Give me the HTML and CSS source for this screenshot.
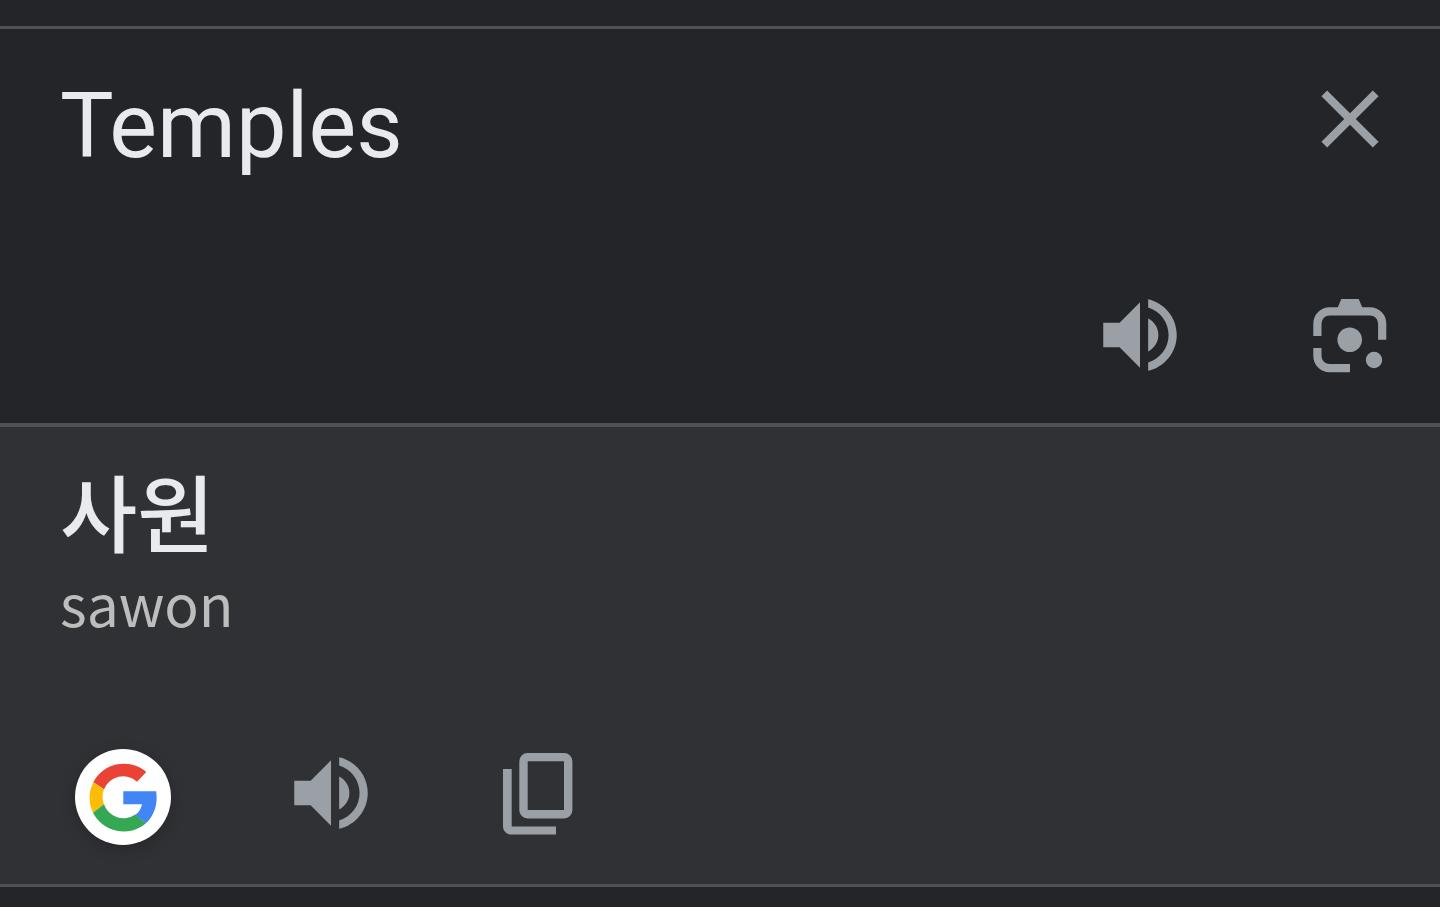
FILE: index.html
```html
<!DOCTYPE html>
<html lang="en">
<head>
<meta charset="utf-8">
<meta name="viewport" content="width=device-width, initial-scale=1">
<title>Translate</title>
<link rel="stylesheet" href="styles.css">
</head>
<body>
<main class="translator">
  <section class="source" aria-label="Source text">
    <div class="source-row">
      <textarea class="source-text" rows="1" aria-label="Text to translate" spellcheck="false">Temples</textarea>
      <button class="icon-button" type="button" aria-label="Clear text">
        <svg class="icon" viewBox="0 0 24 24" aria-hidden="true"><path d="M19 6.41 17.59 5 12 10.59 6.41 5 5 6.41 10.59 12 5 17.59 6.41 19 12 13.41 17.59 19 19 17.59 13.41 12z"/></svg>
      </button>
    </div>
    <div class="actions actions-end">
      <button class="icon-button" type="button" aria-label="Listen to source text">
        <svg class="icon" viewBox="0 0 24 24" aria-hidden="true"><path d="M3 9v6h4l5 5V4L7 9H3zm13.500 3c0-1.770-1.020-3.290-2.500-4.030v8.050c1.480-.73 2.500-2.250 2.500-4.020zM14 3.230v2.060c2.890.86 5 3.540 5 6.710s-2.110 5.850-5 6.710v2.060c4.010-.91 7-4.490 7-8.770s-2.990-7.860-7-8.770z"/></svg>
      </button>
      <button class="icon-button" type="button" aria-label="Translate with camera">
        <svg class="icon" viewBox="0 0 98 98" aria-hidden="true">
          <path d="M40.300 13H57.700L61.500 22H36.500z"/>
          <path class="stroke" d="M16.400 50V37.500A12.200 12.200 0 0 1 28.600 25.300H69A12.200 12.200 0 0 1 81.200 37.500V53.700M16.400 62V70A12.200 12.200 0 0 0 28.600 82.200H49"/>
          <circle cx="48.700" cy="53.700" r="12.300"/>
          <circle cx="73" cy="74" r="8.200"/>
        </svg>
      </button>
    </div>
  </section>
  <section class="target" aria-label="Translation">
    <p class="translation" lang="ko">사원</p>
    <p class="romanization">sawon</p>
    <div class="actions actions-start">
      <button class="google-button" type="button" aria-label="Search with Google">
        <svg class="google-logo" viewBox="0 0 96 96" aria-hidden="true">
          <path fill="#ea4335" d="M18.300 33.300A34.500 34.500 0 0 1 71.300 23L62 32.700A20.600 20.600 0 0 0 29 40.300z"/>
          <path fill="#fbbc05" d="M18.300 33.300A34.500 34.500 0 0 0 18 63.700L29 55.300A20.600 20.600 0 0 1 29 40.300z"/>
          <path fill="#34a853" d="M18 63.700A34.500 34.500 0 0 0 71 74.300L60.300 65.500A20.600 20.600 0 0 1 29 55.300z"/>
          <path fill="#4285f4" d="M48.300 42.300H81.200C83 55 79.500 66.500 71 74.300L60.300 66C64 63.500 66.200 59.500 67 55.300H48.300z"/>
        </svg>
      </button>
      <button class="icon-button" type="button" aria-label="Listen to translation">
        <svg class="icon" viewBox="0 0 24 24" aria-hidden="true"><path d="M3 9v6h4l5 5V4L7 9H3zm13.500 3c0-1.770-1.020-3.290-2.500-4.030v8.050c1.480-.73 2.500-2.250 2.500-4.020zM14 3.230v2.060c2.890.86 5 3.540 5 6.710s-2.110 5.850-5 6.710v2.060c4.010-.91 7-4.490 7-8.770s-2.990-7.860-7-8.770z"/></svg>
      </button>
      <button class="icon-button" type="button" aria-label="Copy translation">
        <svg class="icon" viewBox="0 0 98 98" aria-hidden="true">
          <path fill-rule="evenodd" d="M36.500 9H73.200A8.200 8.200 0 0 1 81.400 17.200V66.200A8.200 8.200 0 0 1 73.200 74.400H36.500A8.200 8.200 0 0 1 28.300 66.200V17.200A8.200 8.200 0 0 1 36.500 9zM36.700 17.300V66H73V17.300z"/>
          <path d="M12 25H20.700V82.400H65V90.600H20.200A8.200 8.200 0 0 1 12 82.400z"/>
        </svg>
      </button>
    </div>
  </section>
</main>
</body>
</html>
```
FILE: styles.css
```css
* {
  box-sizing: border-box;
}

body {
  margin: 0;
  background: #242529;
  color: #e8eaed;
  font-family: Roboto, "Noto Sans CJK KR", sans-serif;
}

.translator {
  padding-top: 26px;
}

.source {
  padding: 41px 41px 39px 60px;
  border-top: 3px solid #505155;
}

.source-row {
  display: flex;
  align-items: flex-start;
}

.source-text {
  flex: 1;
  min-width: 0;
  height: 118px;
  margin: 0;
  padding: 0;
  border: 0;
  outline: 0;
  resize: none;
  overflow: hidden;
  background: transparent;
  color: inherit;
  font-family: inherit;
  font-size: 90px;
  line-height: 114px;
}

.icon-button {
  flex: none;
  width: 98px;
  height: 98px;
  padding: 0;
  border: 0;
  background: transparent;
  color: #9aa0a6;
  cursor: pointer;
}

.icon {
  display: block;
  width: 100%;
  height: 100%;
  fill: currentColor;
}

.stroke {
  fill: none;
  stroke: currentColor;
  stroke-width: 8.2;
}

.actions {
  display: flex;
  align-items: flex-start;
  gap: 112px;
}

.actions-end {
  justify-content: flex-end;
  margin-top: 98px;
}

.target {
  padding: 27px 60px 39px;
  border-top: 4px solid #505155;
  border-bottom: 3px solid #505155;
  background: #303134;
}

.translation,
.romanization {
  margin: 0;
  font-family: "Noto Sans CJK KR", sans-serif;
}

.translation {
  font-size: 84px;
  font-weight: 500;
  line-height: 112px;
}

.romanization {
  color: #bdbdbd;
  font-size: 57px;
  line-height: 72px;
}

.actions-start {
  gap: 111px;
  margin-top: 106px;
  padding-left: 15px;
}

.google-button {
  flex: none;
  width: 96px;
  height: 96px;
  margin-top: 5px;
  padding: 0;
  border: 0;
  border-radius: 50%;
  background: #ffffff;
  box-shadow: 0 4px 16px rgba(0, 0, 0, 0.2);
  cursor: pointer;
}

.google-logo {
  display: block;
  width: 100%;
  height: 100%;
}
```
